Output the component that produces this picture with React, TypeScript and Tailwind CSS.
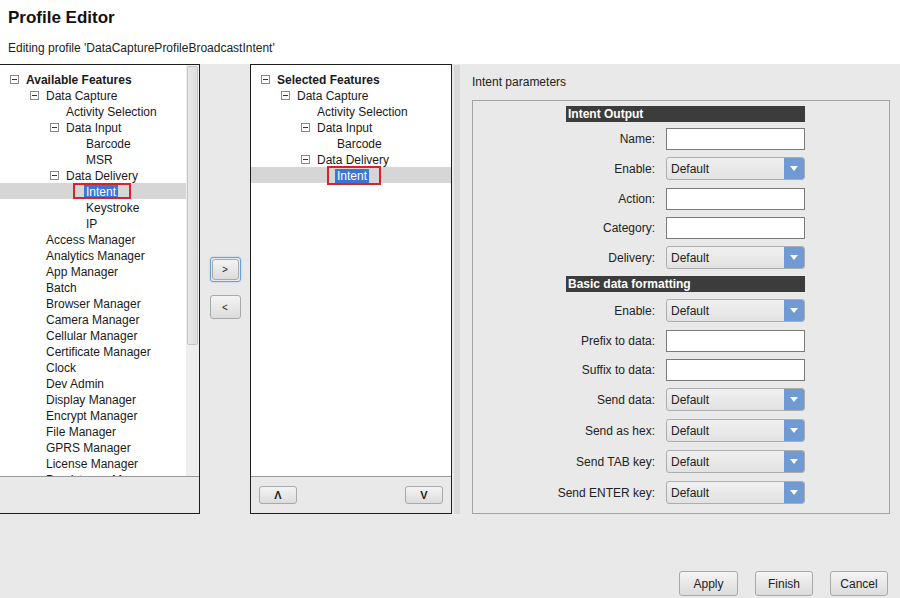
import React from "react";

type Node = { label: string; level: number; box?: boolean; bold?: boolean; sel?: boolean };

const boxPl = ["pl-[10px]", "pl-[30px]", "pl-[50px]", "pl-[70px]"];
const leafPl = ["pl-[26px]", "pl-[46px]", "pl-[66px]", "pl-[86px]"];

function MinusBox() {
  return (
    <span className="relative mr-[7px] inline-block h-[9px] w-[9px] shrink-0 border border-[#8a8a8a] bg-white">
      <span className="absolute left-[1px] top-[3px] h-[1px] w-[5px] bg-[#333]" />
    </span>
  );
}

function TreeRow({ n, redBox }: { n: Node; redBox?: string }) {
  if (n.sel) {
    return (
      <div className="relative flex h-[16px] items-center bg-[#d6d6d6] pl-[84px]">
        <span className="relative top-[1px] leading-[15px]">
          <span className="bg-[#3a76d6] px-[2px] text-white">Intent</span>
        </span>
        {redBox === "left" ? (
          <span className="absolute left-[73px] top-0 h-[16px] w-[58px] border-2 border-[#d4252b]" />
        ) : (
          <span className="absolute left-[76px] top-[-1px] h-[19px] w-[54px] border-2 border-[#d4252b]" />
        )}
      </div>
    );
  }
  return (
    <div className={"flex h-[16px] items-center whitespace-nowrap " + (n.box ? boxPl[n.level] : leafPl[n.level])}>
      {n.box && <MinusBox />}
      <span className={"relative top-[1px] " + (n.bold ? "font-bold" : "")}>{n.label}</span>
    </div>
  );
}

const leftTree: Node[] = [
  { label: "Available Features", level: 0, box: true, bold: true },
  { label: "Data Capture", level: 1, box: true },
  { label: "Activity Selection", level: 2 },
  { label: "Data Input", level: 2, box: true },
  { label: "Barcode", level: 3 },
  { label: "MSR", level: 3 },
  { label: "Data Delivery", level: 2, box: true },
  { label: "Intent", level: 3, sel: true },
  { label: "Keystroke", level: 3 },
  { label: "IP", level: 3 },
  { label: "Access Manager", level: 1 },
  { label: "Analytics Manager", level: 1 },
  { label: "App Manager", level: 1 },
  { label: "Batch", level: 1 },
  { label: "Browser Manager", level: 1 },
  { label: "Camera Manager", level: 1 },
  { label: "Cellular Manager", level: 1 },
  { label: "Certificate Manager", level: 1 },
  { label: "Clock", level: 1 },
  { label: "Dev Admin", level: 1 },
  { label: "Display Manager", level: 1 },
  { label: "Encrypt Manager", level: 1 },
  { label: "File Manager", level: 1 },
  { label: "GPRS Manager", level: 1 },
  { label: "License Manager", level: 1 },
  { label: "Persistence Manager", level: 1 },
];

const midTree: Node[] = [
  { label: "Selected Features", level: 0, box: true, bold: true },
  { label: "Data Capture", level: 1, box: true },
  { label: "Activity Selection", level: 2 },
  { label: "Data Input", level: 2, box: true },
  { label: "Barcode", level: 3 },
  { label: "Data Delivery", level: 2, box: true },
  { label: "Intent", level: 3, sel: true },
];

function WinButton({ children, className }: { children: React.ReactNode; className: string }) {
  return (
    <div
      className={
        "flex items-center justify-center rounded-[3px] border border-[#a9a9a9] bg-gradient-to-b from-[#f4f4f4] to-[#dcdcdc] text-[#222] " +
        className
      }
    >
      {children}
    </div>
  );
}

function TextField() {
  return <div className="h-[22px] w-[139px] border border-[#7a7a7a] bg-white" />;
}

function SelectField() {
  return (
    <div className="flex h-[23px] w-[139px] items-stretch overflow-hidden rounded-[3px] border border-[#adadad] bg-gradient-to-b from-[#f0f0f0] to-[#e2e2e2]">
      <span className="flex flex-1 items-center pl-[4px] text-[#222]">Default</span>
      <span className="flex w-[20px] items-center justify-center bg-[#6f9ad3]">
        <svg width="8" height="5" viewBox="0 0 8 5">
          <path d="M0 0 L8 0 L4 5 Z" fill="#fff" />
        </svg>
      </span>
    </div>
  );
}

function Row({ label, kind, mt }: { label: string; kind: "t" | "s"; mt: string }) {
  return (
    <div className={"flex items-center " + mt}>
      <div className="flex w-[89px] justify-end whitespace-nowrap text-[#222]">{label}</div>
      <div className="ml-[11px]">{kind === "t" ? <TextField /> : <SelectField />}</div>
    </div>
  );
}

function SectionHeader({ label, mt }: { label: string; mt: string }) {
  return (
    <div className={"flex h-[16px] w-[239px] items-center bg-[#3c3c3c] pl-[2px] font-bold text-white " + mt}>
      {label}
    </div>
  );
}

export default function App() {
  return (
    <div
      className="flex h-[598px] w-[900px] flex-col overflow-hidden bg-[#e9e9e9] text-[12px] text-[#1a1a1a]"
      style={{ fontFamily: '"Liberation Sans", Arial, sans-serif' }}
    >
      {/* Header */}
      <div className="h-[64px] shrink-0 bg-white px-[8px] pt-[6px]">
        <div className="text-[17px] font-bold leading-[24px] text-[#111]">Profile Editor</div>
        <div className="mt-[10px] leading-[16px] text-[#222]">
          Editing profile 'DataCaptureProfileBroadcastIntent'
        </div>
      </div>

      {/* Body */}
      <div className="flex h-[450px] shrink-0">
        {/* Left panel */}
        <div className="flex h-[450px] w-[200px] shrink-0 flex-col border-y border-r border-[#1e1e1e]">
          <div className="flex h-[412px] shrink-0 border-b border-[#9a9a9a]">
            <div className="flex-1 overflow-hidden bg-white pt-[6px]">
              {leftTree.map((n, i) => (
                <TreeRow key={i} n={n} redBox="left" />
              ))}
            </div>
            <div className="w-[13px] shrink-0 bg-[#eeeeee] pl-[1px] pr-[1px] pt-[1px]">
              <div className="h-[279px] rounded-[2px] border border-[#c4c4c4] bg-gradient-to-r from-[#e8e8e8] to-[#dedede]" />
            </div>
          </div>
          <div className="flex-1" />
        </div>

        {/* Move buttons */}
        <div className="flex w-[50px] shrink-0 flex-col items-center pt-[193px]">
          <div className="rounded-[3px] border border-[#6a9fd8] p-[1px] shadow-[0_0_2px_#9cc3ee]">
            <WinButton className="h-[21px] w-[27px] border-[#3d7bbf] text-[10px]">&gt;</WinButton>
          </div>
          <WinButton className="mt-[13px] h-[24px] w-[31px] text-[10px]">&lt;</WinButton>
        </div>

        {/* Middle panel */}
        <div className="flex h-[450px] w-[202px] shrink-0 flex-col border border-[#1e1e1e]">
          <div className="h-[412px] shrink-0 border-b border-[#9a9a9a] bg-white pt-[6px]">
            {midTree.map((n, i) => (
              <TreeRow key={i} n={n} redBox="mid" />
            ))}
          </div>
          <div className="flex flex-1 items-start justify-between px-[8px] pt-[9px]">
            <WinButton className="h-[18px] w-[38px] text-[11px] font-bold">Λ</WinButton>
            <WinButton className="h-[18px] w-[38px] text-[11px] font-bold">V</WinButton>
          </div>
        </div>

        {/* Splitter */}
        <div className="flex w-[10px] shrink-0 justify-center pt-[1px]">
          <div className="h-[449px] w-[6px] bg-[radial-gradient(circle,#b4b4b4_0.5px,transparent_0.8px)] bg-[length:2px_2px]" />
        </div>

        {/* Right panel */}
        <div className="flex flex-1 flex-col pl-[10px] pr-[10px]">
          <div className="pt-[10px] leading-[16px] text-[#222]">Intent parameters</div>
          <div className="mt-[10px] h-[415px] border border-[#a3a3a3] pl-[93px] pt-[5px]">
            <SectionHeader label="Intent Output" mt="" />
            <Row label="Name:" kind="t" mt="mt-[6px]" />
            <Row label="Enable:" kind="s" mt="mt-[7px]" />
            <Row label="Action:" kind="t" mt="mt-[8px]" />
            <Row label="Category:" kind="t" mt="mt-[7px]" />
            <Row label="Delivery:" kind="s" mt="mt-[7px]" />
            <SectionHeader label="Basic data formatting" mt="mt-[7px]" />
            <Row label="Enable:" kind="s" mt="mt-[7px]" />
            <Row label="Prefix to data:" kind="t" mt="mt-[8px]" />
            <Row label="Suffix to data:" kind="t" mt="mt-[7px]" />
            <Row label="Send data:" kind="s" mt="mt-[7px]" />
            <Row label="Send as hex:" kind="s" mt="mt-[8px]" />
            <Row label="Send TAB key:" kind="s" mt="mt-[8px]" />
            <Row label="Send ENTER key:" kind="s" mt="mt-[8px]" />
          </div>
        </div>
      </div>

      {/* Footer */}
      <div className="flex flex-1 items-end justify-end gap-[17px] pb-[2px] pr-[12px]">
        <WinButton className="h-[25px] w-[59px] text-[12px]">Apply</WinButton>
        <WinButton className="h-[25px] w-[58px] text-[12px]">Finish</WinButton>
        <WinButton className="h-[25px] w-[58px] text-[12px]">Cancel</WinButton>
      </div>
    </div>
  );
}
